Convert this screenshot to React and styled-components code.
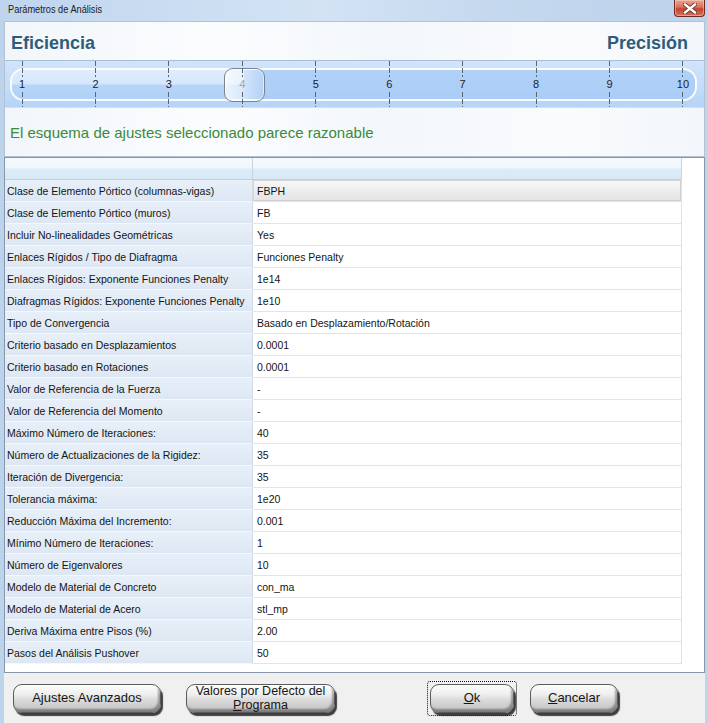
import React from 'react';
import styled, { createGlobalStyle } from 'styled-components';

const Global = createGlobalStyle`
  html, body { margin: 0; padding: 0; }
  body {
    width: 708px; height: 723px; overflow: hidden;
    font-family: "Liberation Sans", Arial, sans-serif;
  }
  * { box-sizing: border-box; }
`;

const Window = styled.div`
  width: 708px;
  height: 723px;
  display: flex;
  flex-direction: column;
  background: linear-gradient(90deg, #bcd3ec 0%, #cadcf0 40%, #c0d5ec 100%);
`;

const TitleBar = styled.div`
  height: 21px;
  flex: none;
  display: flex;
  align-items: flex-start;
  justify-content: space-between;
  padding-left: 8px;
  padding-right: 3px;
  background: linear-gradient(90deg, #bfd5ee, #d3e3f4 45%, #c4d8ee 70%, #bcd3ec);
`;

const Title = styled.div`
  font-size: 11.5px;
  color: #1b1b1b;
  line-height: 19px;
  white-space: nowrap;
  transform: scaleX(0.8);
  transform-origin: left center;
`;

const CloseBtn = styled.div`
  width: 31px;
  height: 17px;
  border: 1px solid #6e2a22;
  border-top: none;
  border-radius: 0 0 4px 4px;
  background: linear-gradient(#e9a596 0%, #d96f59 45%, #c4432e 55%, #d0735d 100%);
  display: flex;
  align-items: center;
  justify-content: center;
  box-shadow: inset 0 0 0 1px rgba(255, 220, 210, 0.45);
`;

const Body = styled.div`
  flex: 1;
  min-height: 0;
  margin: 0 3px 0 4px;
  display: flex;
  flex-direction: column;
  background: #f0f0f0;
`;

const HeaderPanel = styled.div`
  height: 136px;
  flex: none;
  border: 1px solid #b3c1d2;
  display: flex;
  flex-direction: column;
  background: linear-gradient(90deg, #f2f6fa 0%, #fbfcfe 30%, #f3f7fb 55%, #fafbfd 80%, #f2f6fa 100%);
`;

const TitleRow = styled.div`
  height: 38px;
  flex: none;
  display: flex;
  align-items: center;
  justify-content: space-between;
  padding: 4px 16px 0 6px;
`;

const EndLabel = styled.div`
  font-size: 18px;
  font-weight: bold;
  color: #2c5d7b;
`;

const SliderBand = styled.div`
  position: relative;
  height: 48px;
  flex: none;
  padding: 7px 7px 6px 5px;
  border-top: 1px solid #a9bdd3;
  border-bottom: 1px solid #d3e2f1;
  background: linear-gradient(#d0e4fb 0%, #c5ddfa 50%, #b5d4f8 100%);
`;

const Track = styled.div`
  height: 100%;
  display: flex;
  border: 2px solid rgba(255, 255, 255, 0.9);
  border-radius: 14px;
  overflow: hidden;
`;

const TrackFill = styled.div`
  flex: none;
  background: linear-gradient(#e0edfd 0%, #d5e7fc 46%, #b6d5f8 54%, #b0d1f8 100%);
`;

const TrackRest = styled.div`
  flex: 1;
  background: linear-gradient(#b1d1f8, #aacdf7);
`;

const Thumb = styled.div`
  position: absolute;
  left: 219px;
  top: 7px;
  width: 41px;
  height: 34px;
  border: 1px solid #7b8390;
  border-radius: 9px;
  background: linear-gradient(90deg, rgba(255,255,255,0.75) 0%, rgba(245,248,252,0.55) 45%, rgba(200,222,248,0.2) 100%);
  box-shadow: inset 0 0 0 1px rgba(255,255,255,0.6);
`;

const TickLayer = styled.div`
  position: absolute;
  inset: 0;
  display: flex;
  justify-content: space-between;
  padding: 0 14px 0 10px;
`;

const Tick = styled.div`
  width: 14px;
  display: flex;
  flex-direction: column;
  align-items: center;
`;

const Dash = styled.div`
  width: 1px;
  flex: 1;
  background: repeating-linear-gradient(#5b6673 0 5px, transparent 5px 7px);
`;

const TickNum = styled.div`
  font-size: 11px;
  line-height: 13px;
  padding: 1px 0;
  color: ${p => (p.$dim ? '#a0a6ad' : '#1e1e1e')};
`;

const Message = styled.div`
  flex: 1;
  display: flex;
  align-items: center;
  padding-left: 5px;
  font-size: 15px;
  color: #3b8a3b;
`;

const Grid = styled.div`
  flex: 1;
  min-height: 0;
  border: 1px solid #8697ac;
  background: #fff;
`;

const Table = styled.div`
  width: 677px;
  display: flex;
  flex-direction: column;
`;

const Row = styled.div`
  display: flex;
  height: 22px;
`;

const HeadCell = styled.div`
  width: ${p => p.$w}px;
  flex: none;
  border-right: 1px solid #c8d6e3;
  border-bottom: 1px solid #c3d1de;
  background: linear-gradient(#f4f9fd 0%, #eff7fc 46%, #dcedf8 52%, #d6e9f5 100%);
`;

const LabelCell = styled.div`
  width: 248px;
  flex: none;
  display: flex;
  align-items: center;
  padding-left: 2px;
  font-size: 10.5px;
  color: #141414;
  white-space: nowrap;
  border-right: 1px solid #d3dbe4;
  border-bottom: 1px solid #f5f8fb;
  background: linear-gradient(#e8eff8, #dde7f3);
`;

const ValueCell = styled.div`
  flex: 1;
  display: flex;
  align-items: center;
  padding-left: 4px;
  font-size: 10.5px;
  color: #141414;
  white-space: nowrap;
  border-right: 1px solid #e2e2e2;
  border-bottom: 1px solid #e4e4e4;
  background: ${p => (p.$selected ? 'linear-gradient(#f8f8f8, #ebebeb 60%, #e4e4e4)' : '#fff')};
  box-shadow: ${p => (p.$selected ? 'inset 1px 1px 0 #d6d6d6, inset -1px -1px 0 #d0d0d0' : 'none')};
`;

const ButtonBar = styled.div`
  height: 50px;
  flex: none;
  display: flex;
  align-items: center;
  padding-left: 6px;
`;

const Focus = styled.div`
  margin-left: ${p => p.$ml || 0}px;
  padding: 2px;
  border: ${p => (p.$focused ? '1px dotted #111' : '1px solid transparent')};
  border-radius: 3px;
  display: flex;
`;

const Button = styled.div`
  width: ${p => p.$w}px;
  height: 29px;
  border: 1px solid #5a5a5a;
  border-radius: 9px;
  display: flex;
  align-items: center;
  justify-content: center;
  color: #151515;
  background: linear-gradient(#fdfdfd 0%, #eeeeee 35%, #dadada 55%, #c9c9c9 85%, #b5b5b5 100%);
  box-shadow: inset 0 1px 0 #fff, inset -2px -3px 2px rgba(0,0,0,0.32), 2px 3px 1px rgba(30,30,30,0.85);
`;

const ButtonText = styled.span`
  display: block;
  text-align: center;
  font-size: ${p => p.$size || 13}px;
  line-height: 14px;
  white-space: nowrap;
  u { text-decoration: underline; }
`;

const ticks = [1, 2, 3, 4, 5, 6, 7, 8, 9, 10];

const rows = [
  ['Clase de Elemento Pórtico (columnas-vigas)', 'FBPH'],
  ['Clase de Elemento Pórtico (muros)', 'FB'],
  ['Incluir No-linealidades Geométricas', 'Yes'],
  ['Enlaces Rígidos / Tipo de Diafragma', 'Funciones Penalty'],
  ['Enlaces Rígidos: Exponente Funciones Penalty', '1e14'],
  ['Diafragmas Rígidos: Exponente Funciones Penalty', '1e10'],
  ['Tipo de Convergencia', 'Basado en Desplazamiento/Rotación'],
  ['Criterio basado en Desplazamientos', '0.0001'],
  ['Criterio basado en Rotaciones', '0.0001'],
  ['Valor de Referencia de la Fuerza', '-'],
  ['Valor de Referencia del Momento', '-'],
  ['Máximo Número de Iteraciones:', '40'],
  ['Número de Actualizaciones de la Rigidez:', '35'],
  ['Iteración de Divergencia:', '35'],
  ['Tolerancia máxima:', '1e20'],
  ['Reducción Máxima del Incremento:', '0.001'],
  ['Mínimo Número de Iteraciones:', '1'],
  ['Número de Eigenvalores', '10'],
  ['Modelo de Material de Concreto', 'con_ma'],
  ['Modelo de Material de Acero', 'stl_mp'],
  ['Deriva Máxima entre Pisos (%)', '2.00'],
  ['Pasos del Análisis Pushover', '50'],
];

export default function App() {
  return (
    <>
      <Global />
      <Window>
        <TitleBar>
          <Title>Parámetros de Análisis</Title>
          <CloseBtn>
            <svg width="14" height="11" viewBox="0 0 14 11">
              <path d="M2 1.5 L12 9.5 M12 1.5 L2 9.5" stroke="#5a2a22" strokeWidth="4" strokeLinecap="square" />
              <path d="M2 1.5 L12 9.5 M12 1.5 L2 9.5" stroke="#fff" strokeWidth="2.4" strokeLinecap="square" />
            </svg>
          </CloseBtn>
        </TitleBar>
        <Body>
          <HeaderPanel>
            <TitleRow>
              <EndLabel>Eficiencia</EndLabel>
              <EndLabel>Precisión</EndLabel>
            </TitleRow>
            <SliderBand>
              <Track>
                <TrackFill style={{ width: 232 }} />
                <TrackRest />
              </Track>
              <Thumb />
              <TickLayer>
                {ticks.map(t => (
                  <Tick key={t}>
                    <Dash />
                    <TickNum $dim={t === 4}>{t}</TickNum>
                    <Dash />
                  </Tick>
                ))}
              </TickLayer>
            </SliderBand>
            <Message>El esquema de ajustes seleccionado parece razonable</Message>
          </HeaderPanel>
          <Grid>
            <Table>
              <Row>
                <HeadCell $w={248} />
                <HeadCell $w={429} />
              </Row>
              {rows.map(([l, v], i) => (
                <Row key={l}>
                  <LabelCell>{l}</LabelCell>
                  <ValueCell $selected={i === 0}>{v}</ValueCell>
                </Row>
              ))}
            </Table>
          </Grid>
          <ButtonBar>
            <Focus>
              <Button $w={148}><ButtonText>A<u>j</u>ustes Avanzados</ButtonText></Button>
            </Focus>
            <Focus $ml={19}>
              <Button $w={149}>
                <ButtonText $size={12.5}>Valores por Defecto del<br /><u>P</u>rograma</ButtonText>
              </Button>
            </Focus>
            <Focus $ml={89} $focused>
              <Button $w={84}><ButtonText><u>O</u>k</ButtonText></Button>
            </Focus>
            <Focus $ml={10}>
              <Button $w={88}><ButtonText><u>C</u>ancelar</ButtonText></Button>
            </Focus>
          </ButtonBar>
        </Body>
      </Window>
    </>
  );
}
